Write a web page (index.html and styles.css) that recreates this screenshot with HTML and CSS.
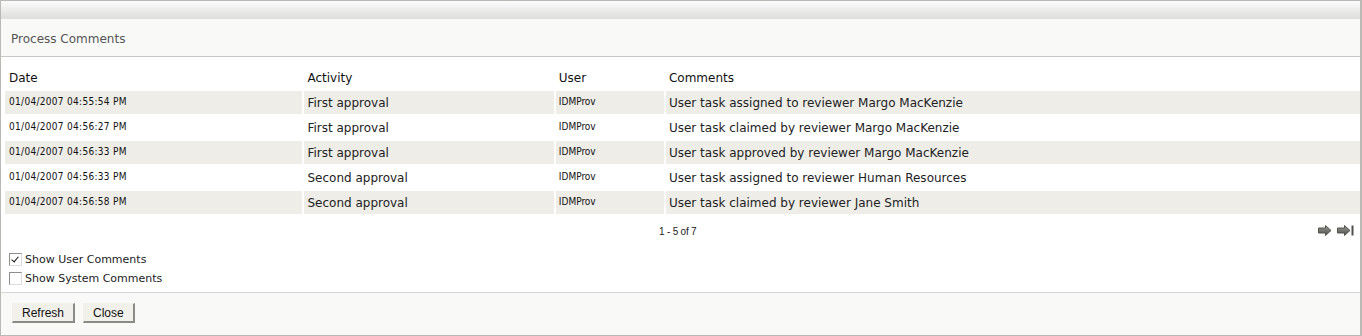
FILE: index.html
```html
<!DOCTYPE html>
<html lang="en">
<head>
  <meta charset="UTF-8">
  <title>Process Comments</title>
  <link rel="stylesheet" href="styles.css">
</head>
<body>
  <div id="dialog">
    <div class="top-strip"></div>
    <div class="title-bar">Process Comments</div>

    <div class="content">
      <table class="grid">
        <colgroup>
          <col class="c-date">
          <col class="c-activity">
          <col class="c-user">
          <col class="c-comments">
        </colgroup>
        <thead>
          <tr>
            <th>Date</th>
            <th>Activity</th>
            <th>User</th>
            <th>Comments</th>
          </tr>
        </thead>
        <tbody>
          <tr class="odd">
            <td class="small">01/04/2007 04:55:54 PM</td>
            <td>First approval</td>
            <td class="small">IDMProv</td>
            <td>User task assigned to reviewer Margo MacKenzie</td>
          </tr>
          <tr>
            <td class="small">01/04/2007 04:56:27 PM</td>
            <td>First approval</td>
            <td class="small">IDMProv</td>
            <td>User task claimed by reviewer Margo MacKenzie</td>
          </tr>
          <tr class="odd">
            <td class="small">01/04/2007 04:56:33 PM</td>
            <td>First approval</td>
            <td class="small">IDMProv</td>
            <td>User task approved by reviewer Margo MacKenzie</td>
          </tr>
          <tr>
            <td class="small">01/04/2007 04:56:33 PM</td>
            <td>Second approval</td>
            <td class="small">IDMProv</td>
            <td>User task assigned to reviewer Human Resources</td>
          </tr>
          <tr class="odd">
            <td class="small">01/04/2007 04:56:58 PM</td>
            <td>Second approval</td>
            <td class="small">IDMProv</td>
            <td>User task claimed by reviewer Jane Smith</td>
          </tr>
        </tbody>
      </table>

      <div class="pager">
        <div class="pager-count">1 - 5 of 7</div>
        <div class="pager-nav">
          <svg width="14" height="11" viewBox="0 0 14 11">
            <defs>
              <linearGradient id="ag" x1="0" y1="0" x2="0" y2="1">
                <stop offset="0" stop-color="#9a9a96"/>
                <stop offset="1" stop-color="#4e4e4a"/>
              </linearGradient>
            </defs>
            <path d="M0.5 3 H7.5 V0.5 L13 5.5 L7.5 10.5 V8 H0.5 Z" fill="url(#ag)" stroke="#55554f" stroke-width="1"/>
          </svg>
          <svg width="17" height="11" viewBox="0 0 17 11">
            <path d="M0.5 3 H7.5 V0.5 L13 5.5 L7.5 10.5 V8 H0.5 Z" fill="url(#ag)" stroke="#55554f" stroke-width="1"/>
            <rect x="14.5" y="0.5" width="2" height="10" fill="#4e4e4a"/>
          </svg>
        </div>
      </div>

      <div class="options">
        <label class="opt"><span class="box checked"></span>Show User Comments</label>
        <label class="opt"><span class="box"></span>Show System Comments</label>
      </div>
    </div>

    <div class="footer">
      <button class="btn">Refresh</button>
      <button class="btn">Close</button>
    </div>
  </div>
</body>
</html>
```

FILE: styles.css
```css
* { box-sizing: border-box; }

body {
  margin: 0;
  background: #ffffff;
  font-family: "DejaVu Sans", Verdana, sans-serif;
  color: #222;
}

#dialog {
  width: 1362px;
  height: 336px;
  border: 1px solid #b9b9b6;
  border-right: 2px solid #b9b9b6;
  display: flex;
  flex-direction: column;
  background: #fff;
}

.top-strip {
  height: 18px;
  background: linear-gradient(#fbfbfb, #dcdedb);
}

.title-bar {
  height: 38px;
  background: #f9f9f7;
  border-bottom: 1px solid #c8c8c6;
  padding: 2px 0 0 10px;
  display: flex;
  align-items: center;
  font-size: 12px;
  color: #555;
}

.content {
  flex: 1;
  padding: 7px 2px 0 2px;
}

.grid {
  border-collapse: separate;
  border-spacing: 2px;
  table-layout: fixed;
  width: 1359px;
}

.c-date { width: 297px; }
.c-activity { width: 249px; }
.c-user { width: 108px; }
.c-comments { width: 693px; }

.grid th,
.grid td {
  height: 23px;
  padding: 1px 3px 0;
  text-align: left;
  font-weight: normal;
  font-size: 12px;
  color: #222;
  white-space: nowrap;
}

.grid th:first-child,
.grid td:first-child { padding-left: 4px; }

.grid th { color: #111; }

.grid tr.odd td { background: #eeede8; }

.grid td.small {
  font-family: "DejaVu Sans Condensed", "Liberation Sans", sans-serif;
  font-size: 10px;
  letter-spacing: 0.3px;
  vertical-align: top;
  padding-top: 5px;
  color: #111;
}

.grid td.small:nth-child(3) { letter-spacing: 0; }

.pager {
  display: flex;
  align-items: center;
  height: 30px;
}

.pager-count {
  margin-left: 656px;
  font-family: "Liberation Sans", sans-serif;
  font-size: 10px;
  letter-spacing: -0.2px;
  white-space: nowrap;
  color: #222;
}

.pager-nav {
  margin-left: auto;
  display: flex;
  gap: 5px;
  padding-right: 4px;
  margin-bottom: 1px;
}

.options {
  padding: 7px 0 0 6px;
  display: flex;
  flex-direction: column;
  gap: 6px;
}

.opt {
  display: flex;
  align-items: center;
  font-size: 11px;
  color: #222;
  height: 13px;
}

.box {
  width: 13px;
  height: 13px;
  border: 1px solid #8e8e8a;
  border-right-color: #dcdcd8;
  border-bottom-color: #dcdcd8;
  background: #fff;
  margin-right: 3px;
  position: relative;
}

.box.checked::after {
  content: "";
  position: absolute;
  left: 3px;
  top: 1px;
  width: 3px;
  height: 6px;
  border-right: 1.5px solid #111;
  border-bottom: 1.5px solid #111;
  transform: rotate(40deg);
}

.footer {
  height: 43px;
  border-top: 1px solid #d6d6d4;
  background: #f9f9f7;
  display: flex;
  align-items: center;
  gap: 8px;
  padding: 0 0 2px 11px;
}

.btn {
  height: 20px;
  padding: 0 9px;
  font-family: "Liberation Sans", Arial, sans-serif;
  font-size: 12px;
  color: #111;
  background: #f1f0eb;
  border: 1px solid #f1f0eb;
  border-right: 2px solid #8a8a86;
  border-bottom: 2px solid #8a8a86;
  border-radius: 0;
}
```
